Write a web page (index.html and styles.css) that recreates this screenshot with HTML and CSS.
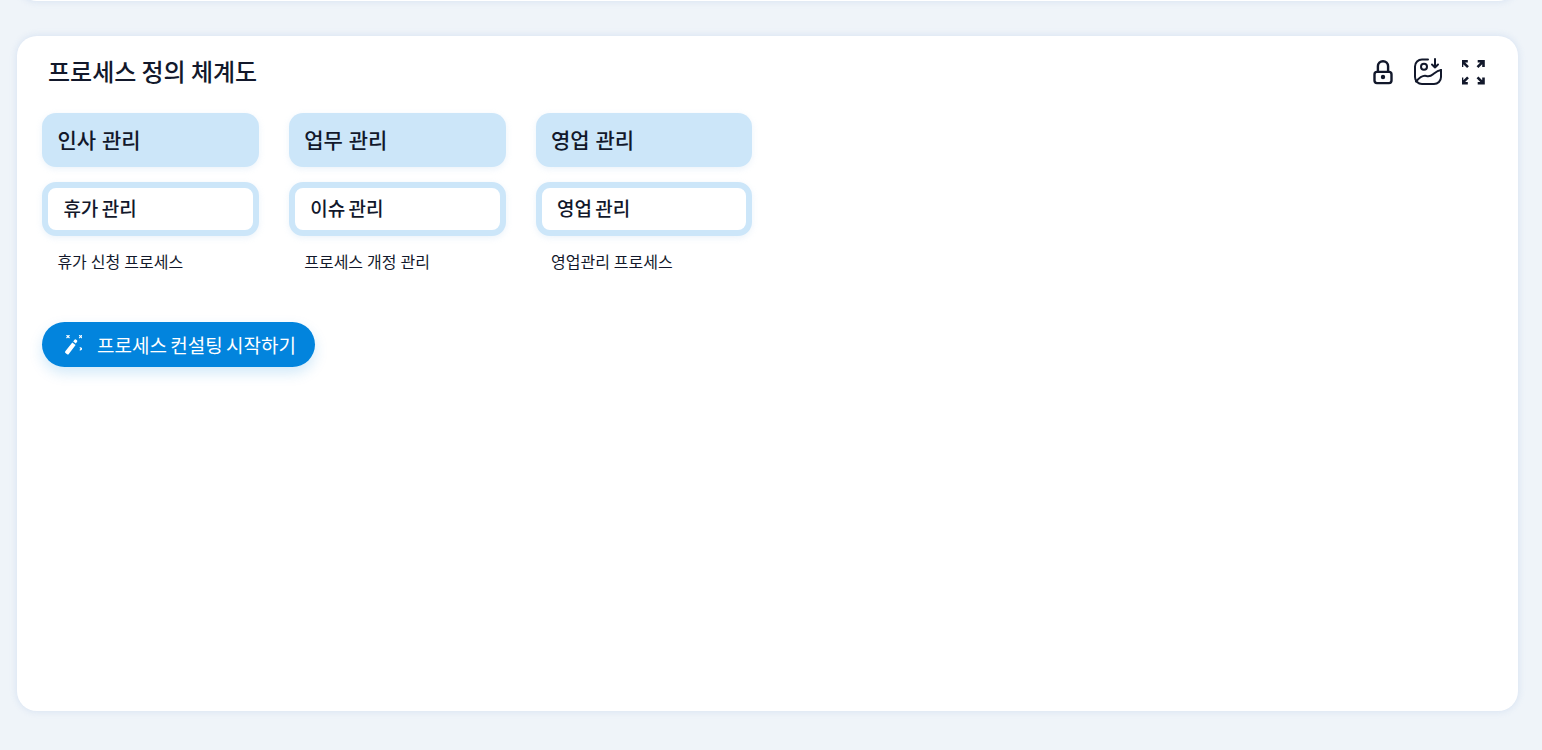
FILE: index.html
```html
<!DOCTYPE html>
<html lang="ko">
<head>
<meta charset="utf-8">
<title>프로세스 정의 체계도</title>
<link rel="stylesheet" href="styles.css">
</head>
<body>
<div class="page">
  <section class="card-top"></section>
  <section class="card">
    <header class="card-head">
      <h2 class="card-title">프로세스 정의 체계도</h2>
      <div class="tools">
        <svg class="tool" width="22" height="28" viewBox="0 0 22 28" fill="none" stroke="#12182b" stroke-width="2.4" stroke-linecap="round" stroke-linejoin="round">
          <rect x="2.500" y="13.900" width="17" height="11.200" rx="2.500"/>
          <path d="M5.900 13.900V8.300a5.100 5.100 0 0 1 10.200 0v5.600"/>
          <circle cx="11" cy="19" r="2.200" fill="#12182b" stroke="none"/>
        </svg>
        <svg class="tool" width="28" height="28" viewBox="0 0 28 28" fill="none" stroke="#12182b" stroke-width="2" stroke-linecap="round" stroke-linejoin="round">
          <path d="M14 1.500H8a7 7 0 0 0-7 7V19a7 7 0 0 0 7 7h12a7 7 0 0 0 7-7v-7"/>
          <circle cx="10" cy="8.700" r="3"/>
          <path d="M2 23.500c3-3.500 7-6.500 10.500-5.500 4 1 5-.5 7.500-2.500 2-1.600 4-3 7-3.500"/>
          <path d="M21 1v8.500M18 6.500l3 3 3-3"/>
        </svg>
        <svg class="tool" width="24" height="28" viewBox="0 0 24 28" fill="none" stroke="#12182b" stroke-width="2.600">
          <path d="M0 9V3.200h5.800M.5 3.700 6 9.200"/>
          <path d="M21.500 9V3.200h-5.800M21 3.700l-5.500 5.500"/>
          <path d="M0 19.500v5.800h5.800M.5 24.800 6 19.300"/>
          <path d="M21.500 19.500v5.800h-5.800M21 24.800l-5.500-5.500"/>
        </svg>
      </div>
    </header>
    <div class="columns">
      <div class="col">
        <div class="head-box">인사 관리</div>
        <div class="sub-box">휴가 관리</div>
        <div class="item">휴가 신청 프로세스</div>
      </div>
      <div class="col">
        <div class="head-box">업무 관리</div>
        <div class="sub-box">이슈 관리</div>
        <div class="item">프로세스 개정 관리</div>
      </div>
      <div class="col">
        <div class="head-box">영업 관리</div>
        <div class="sub-box">영업 관리</div>
        <div class="item">영업관리 프로세스</div>
      </div>
    </div>
    <button class="cta" type="button">
      <svg class="cta-icon" width="20" height="20" viewBox="0 0 20 20" fill="none">
        <path d="M10.300 7.600l3.300 2.400-6.800 9a1.200 1.200 0 0 1-1.700.2l-1.600-1.200a1.200 1.200 0 0 1-.2-1.700z" fill="#fff"/>
        <path d="M11.200 6.400l1.300-1.700a1 1 0 0 1 1.400-.2l1 .8a1 1 0 0 1 .2 1.400l-1.300 1.700z" fill="#fff"/>
        <path d="M4.500 0l3 3M7.500 0l-3 3M17.200 0l3 3M20.200 0l-3 3M17.800 12.300l3 3M20.800 12.300l-3 3" stroke="#fff" stroke-width="1.100"/>
      </svg>
      <span>프로세스 컨설팅 시작하기</span>
    </button>
  </section>
</div>
</body>
</html>
```
FILE: styles.css
```css
* {
  box-sizing: border-box;
}

html,
body {
  margin: 0;
  height: 100%;
  overflow: hidden;
}

body {
  background: #eff4f9;
  font-family: "Noto Sans CJK KR", "Noto Sans", sans-serif;
  color: #12182b;
}

.page {
  display: flex;
  flex-direction: column;
  gap: 35px;
  width: 1501px;
  margin-left: 17px;
  margin-top: -39px;
}

.card-top,
.card {
  background: #fff;
  border-radius: 20px;
  box-shadow: 0 0 6px 1px rgba(190, 208, 236, 0.45);
}

.card-top {
  height: 40px;
}

.card {
  height: 675px;
  padding: 17px 25px 0;
}

.card-head {
  display: flex;
  justify-content: space-between;
  align-items: center;
  height: 36px;
  margin-bottom: 24px;
}

.card-title {
  margin: 0 0 0 6px;
  font-size: 24px;
  font-weight: 500;
  line-height: 34px;
  word-spacing: -1.500px;
}

.tools {
  display: flex;
  align-items: center;
  gap: 20px;
  margin-top: 2px;
  margin-right: 7px;
}

.tool {
  display: block;
}

.columns {
  display: flex;
  gap: 30px;
}

.col {
  width: 216.800px;
}

.head-box {
  height: 54px;
  padding-left: 15.400px;
  background: #cce6f9;
  border-radius: 14px;
  box-shadow: 0 2px 6px rgba(190, 215, 240, 0.3);
  font-size: 21px;
  font-weight: 500;
  line-height: 53px;
}

.sub-box {
  height: 54px;
  margin-top: 15px;
  padding-left: 15.400px;
  background: #fff;
  border: 6px solid #cce6f9;
  border-radius: 14px;
  box-shadow: 0 2px 6px rgba(190, 215, 240, 0.3);
  font-size: 19px;
  font-weight: 500;
  line-height: 39px;
  word-spacing: -2px;
}

.item {
  margin-top: 13px;
  padding-left: 15.400px;
  font-size: 16px;
  line-height: 24px;
  word-spacing: -0.500px;
  color: #12182b;
}

.cta {
  display: flex;
  align-items: center;
  gap: 15px;
  height: 45px;
  margin-top: 49px;
  padding: 0 19px 0 20px;
  border: 0;
  border-radius: 23px;
  background: #0284dd;
  box-shadow: 0 6px 14px rgba(2, 132, 221, 0.18);
  color: #fff;
  font-family: inherit;
  font-size: 19px;
  line-height: 45px;
  word-spacing: -2px;
  white-space: nowrap;
}

.cta-icon {
  flex: none;
}
```
